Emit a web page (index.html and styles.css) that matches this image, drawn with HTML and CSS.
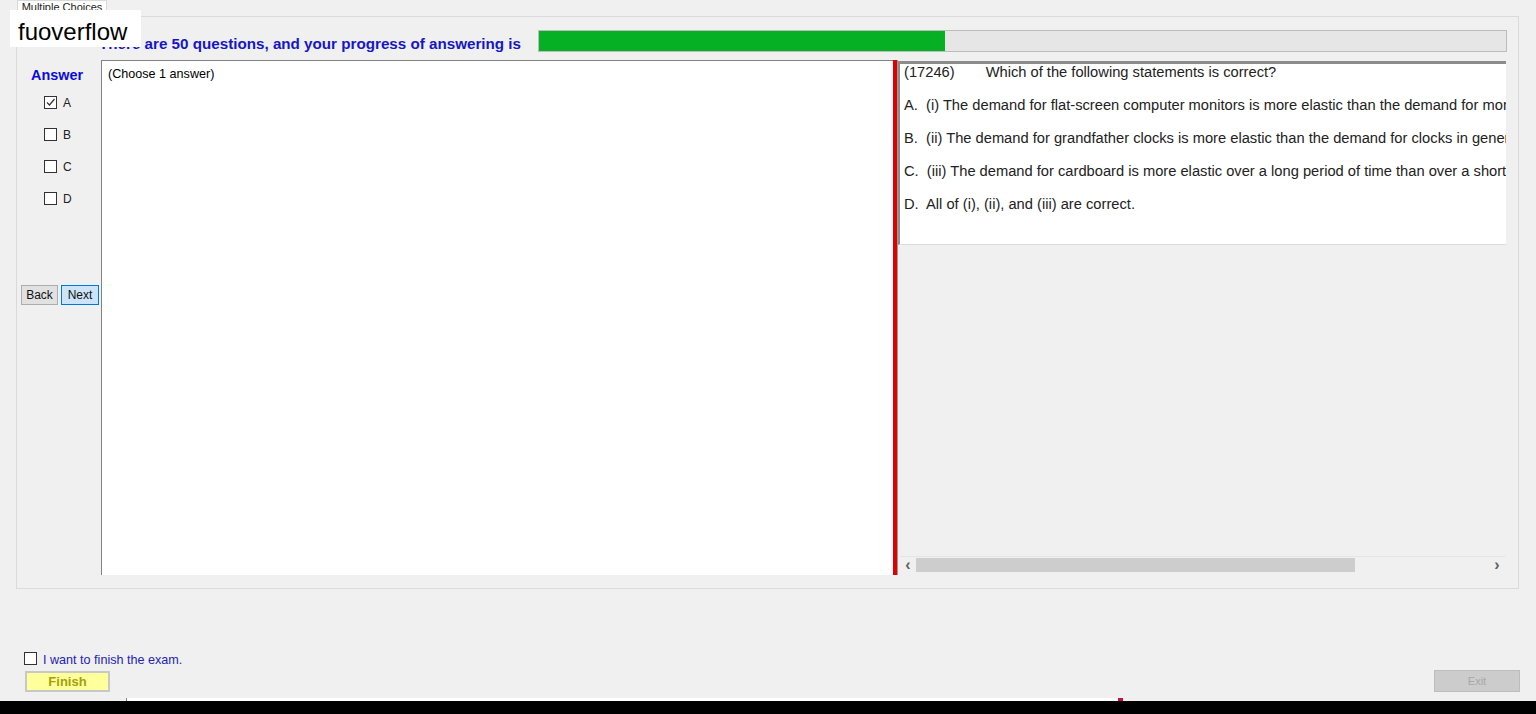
FILE: index.html
```html
<!DOCTYPE html>
<html lang="en">
<head>
  <meta charset="UTF-8" />
  <title>Multiple Choices</title>
  <link rel="stylesheet" href="styles.css">
</head>
<body>

<div class="app">
  <div class="tabstrip"><div class="tab">Multiple Choices</div></div>

  <div class="tabpage">
    <div class="head">
      <div class="title">There are 50 questions, and your progress of answering is</div>
      <div class="progress"><div class="fill" style="width:42%"></div></div>
    </div>

    <div class="body">
      <div class="answers">
        <div class="answer-title">Answer</div>
        <div class="opts">
          <label class="opt"><span class="box checked"><svg viewBox="0 0 11 11" width="11" height="11"><path d="M2 5.5 L4.5 8 L9.5 2" fill="none" stroke="#333" stroke-width="1.2"/></svg></span>A</label>
          <label class="opt"><span class="box"></span>B</label>
          <label class="opt"><span class="box"></span>C</label>
          <label class="opt"><span class="box"></span>D</label>
        </div>
        <div class="nav">
          <button class="btn">Back</button>
          <button class="btn focus">Next</button>
        </div>
      </div>

      <div class="note">(Choose 1 answer)</div>
      <div class="splitter"></div>

      <div class="question">
        <div class="qtext">
          <p>(17246)<span class="tab-gap"></span>Which of the following statements is correct?</p>
          <p>A.&nbsp; (i) The demand for flat-screen computer monitors is more elastic than the demand for monitors in general.</p>
          <p>B.&nbsp; (ii) The demand for grandfather clocks is more elastic than the demand for clocks in general.</p>
          <p>C.&nbsp; (iii) The demand for cardboard is more elastic over a long period of time than over a short period of time.</p>
          <p>D.&nbsp; All of (i), (ii), and (iii) are correct.</p>
        </div>
        <div class="hscroll">
          <span class="arrow">&#8249;</span>
          <div class="track"><div class="thumb"></div></div>
          <span class="arrow">&#8250;</span>
        </div>
      </div>
    </div>
  </div>

  <div class="footer">
    <div class="finish-row">
      <label class="finish-check"><span class="box"></span><span class="finish-text">I want to finish the exam.</span></label>
      <button class="finish">Finish</button>
    </div>
    <button class="exit">Exit</button>
  </div>

  <div class="taskbar">
    <div class="edge"><span class="mark"></span></div>
    <div class="black"></div>
  </div>
</div>

<div class="brand">fuoverflow</div>

</body>
</html>
```

FILE: styles.css
```css
body {
  margin: 0;
  font-family: 'Liberation Sans', Arial, sans-serif;
  background: #f0f0f0;
  color: #000;
}
.app {
  height: 714px;
  display: flex;
  flex-direction: column;
  overflow: hidden;
}
.tabstrip {
  height: 16px;
  padding-left: 17px;
  display: flex;
}
.tab {
  width: 88px;
  border: 1px solid #d9d9d9;
  border-bottom: none;
  background: #fff;
  font-size: 11px;
  line-height: 12px;
  text-align: center;
  color: #222;
}
.tabpage {
  margin: 0 17px 0 16px;
  height: 571px;
  border: 1px solid #dadada;
  display: flex;
  flex-direction: column;
}
.head {
  height: 43px;
  padding: 12px 11px 0 82px;
  box-sizing: border-box;
  display: flex;
  align-items: flex-end;
  justify-content: space-between;
}
.title {
  color: #1616c4;
  font-weight: bold;
  font-size: 15.2px;
  line-height: 16px;
  margin-bottom: 8px;
}
.progress {
  width: 967px;
  height: 20px;
  margin-bottom: 8px;
  border: 1px solid #bcbcbc;
  background: #e6e6e6;
}
.fill {
  height: 100%;
  background: #06b025;
}
.body {
  height: 515px;
  display: flex;
}
.answers {
  width: 84px;
  display: flex;
  flex-direction: column;
}
.answer-title {
  color: #0a0adc;
  font-weight: bold;
  font-size: 14.4px;
  line-height: 16px;
  margin: 7px 0 0 14px;
}
.opts {
  margin: 13px 0 0 27px;
  display: grid;
  gap: 19px;
}
.opt {
  display: flex;
  align-items: center;
  gap: 6px;
  height: 13px;
  font-size: 12px;
  color: #222;
}
.box {
  width: 11px;
  height: 11px;
  border: 1px solid #333;
  background: #fff;
  display: inline-block;
}
.box svg { display: block; }
.nav {
  margin: 80px 0 0 4px;
  display: flex;
  gap: 3px;
}
.btn {
  font-family: inherit;
  font-size: 12px;
  height: 20px;
  width: 37px;
  padding: 0;
  border: 1px solid #adadad;
  background: #e1e1e1;
  color: #111;
}
.btn.focus {
  width: 38px;
  border-color: #0078d7;
  background: #cce4f7;
}
.note {
  width: 792px;
  box-sizing: border-box;
  border-top: 1px solid #838383;
  border-left: 1px solid #838383;
  background: #fff;
  font-size: 12.6px;
  line-height: 14px;
  padding: 6px 0 0 6px;
}
.splitter {
  width: 4px;
  background: #e00000;
  border-right: 1px solid #9a9a9a;
}
.question {
  width: 608px;
  display: flex;
  flex-direction: column;
  justify-content: space-between;
}
.qtext {
  height: 180px;
  margin-top: 1px;
  border-top: 3px solid #8c8c8c;
  border-left: 2px solid #8c8c8c;
  border-bottom: 1px solid #dcdcdc;
  background: #fff;
  overflow: hidden;
  white-space: nowrap;
  font-size: 14.7px;
  color: #222;
  padding-left: 4px;
}
.qtext p {
  margin: 16px 0 0;
  line-height: 17px;
}
.qtext p:first-child { margin-top: 0; }
.tab-gap {
  display: inline-block;
  width: 31px;
}
.hscroll {
  height: 15px;
  margin: 0 1px 3px 2px;
  border-top: 1px solid #e4e4e4;
  display: flex;
  align-items: center;
  background: #f0f0f0;
}
.arrow {
  width: 16px;
  text-align: center;
  font-size: 16px;
  line-height: 15px;
  font-weight: bold;
  color: #606060;
}
.track {
  flex: 1;
  height: 100%;
  display: flex;
  align-items: center;
}
.thumb {
  width: 439px;
  height: 14px;
  background: #cdcdcd;
}
.footer {
  height: 109px;
  padding: 0 16px 6px 24px;
  box-sizing: border-box;
  display: flex;
  align-items: flex-end;
  justify-content: space-between;
}
.finish-row {
  display: flex;
  flex-direction: column;
  gap: 5px;
}
.finish-check {
  display: flex;
  align-items: flex-start;
  gap: 6px;
  height: 16px;
  font-size: 12.6px;
  line-height: 16px;
  color: #2323b4;
}
.finish-check .box { margin-top: 2px; }
.finish-text { margin-top: 2px; }
.finish {
  margin-left: 1px;
  width: 85px;
  height: 21px;
  padding: 0;
  font-family: inherit;
  font-size: 13px;
  font-weight: bold;
  color: #a1a10c;
  background: #ffff9c;
  border: 2px solid #c8c8c8;
}
.exit {
  width: 86px;
  height: 22px;
  padding: 0;
  font-family: inherit;
  font-size: 11px;
  color: #a8a8a8;
  background: #cccccc;
  border: 1px solid #bdbdbd;
}
.taskbar {
  height: 16px;
  display: flex;
  flex-direction: column;
}
.edge {
  height: 3px;
  margin-left: 126px;
  width: 996px;
  background: #fff;
  border-left: 1px solid #888;
  display: flex;
  justify-content: flex-end;
}
.mark {
  width: 5px;
  background: #c8103c;
}
.black {
  flex: 1;
  background: #000;
}
.brand {
  position: absolute;
  left: 10px;
  top: 10px;
  width: 123px;
  height: 37px;
  padding-left: 8px;
  background: #fff;
  font-size: 24px;
  line-height: 43px;
  color: #000;
}
```
